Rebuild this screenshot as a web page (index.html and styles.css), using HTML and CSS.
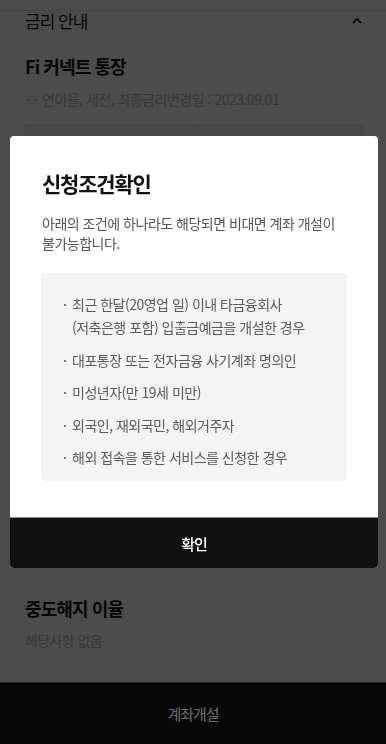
FILE: index.html
```html
<!DOCTYPE html>
<html lang="ko">
<head>
    <meta charset="UTF-8">
    <meta name="viewport" content="width=device-width, initial-scale=1.0">
    <title>Fi 커넥트 통장</title>
    <link rel="stylesheet" href="styles.css">
</head>
<body>

    <div class="page">
        <div class="prev-section"></div>

        <section class="rate-section">
            <div class="rate-head">
                <span class="rate-head-title">금리 안내</span>
                <svg class="chevron" width="10" height="7" viewBox="0 0 10 7">
                    <polyline points="1,6 5,1.8 9,6" fill="none" stroke="#111" stroke-width="1.8"/>
                </svg>
            </div>

            <h2 class="product-title">Fi 커넥트 통장</h2>
            <p class="rate-note">※ 연이율, 세전, 최종금리변경일 : 2023.09.01</p>

            <!-- rate table sits under the dialog, cells left blank -->
            <table class="rate-table">
                <tr>
                    <th></th>
                    <th></th>
                </tr>
                <tr>
                    <td></td>
                    <td></td>
                </tr>
                <tr>
                    <td></td>
                    <td></td>
                </tr>
            </table>
        </section>

        <section class="cancel-section">
            <h2 class="section-title">중도해지 이율</h2>
            <p class="section-text">해당사항 없음</p>
        </section>
    </div>

    <div class="dim"></div>

    <div class="modal">
        <div class="modal-body">
            <h3 class="modal-title">신청조건확인</h3>
            <p class="modal-desc">아래의 조건에 하나라도 해당되면 비대면 계좌 개설이 불가능합니다.</p>

            <ul class="cond-list">
                <li><span class="dot">·</span><span>최근 한달(20영업 일) 이내 타금융회사<br>(저축은행 포함) 입출금예금을 개설한 경우</span></li>
                <li><span class="dot">·</span><span>대포통장 또는 전자금융 사기계좌 명의인</span></li>
                <li><span class="dot">·</span><span>미성년자(만 19세 미만)</span></li>
                <li><span class="dot">·</span><span>외국인, 재외국민, 해외거주자</span></li>
                <li><span class="dot">·</span><span>해외 접속을 통한 서비스를 신청한 경우</span></li>
            </ul>
        </div>
        <button class="modal-button">확인</button>
    </div>

    <div class="bottom-bar">
        <button class="open-button">계좌개설</button>
    </div>

</body>
</html>
```

FILE: styles.css
```css
body {
    margin: 0;
    font-family: "Noto Sans CJK KR", "Noto Sans", sans-serif;
    background-color: #ffffff;
    color: #111111;
    height: 744px;
    overflow: hidden;
    word-break: keep-all;
}

.page {
    padding: 0 23px 0 24px;
}

.prev-section {
    height: 10px;
}

.rate-section {
    border-top: 1px solid #e6e6e6;
    margin: 0 -23px 0 -24px;
    padding: 0 23px 0 24px;
}

.rate-head {
    display: flex;
    justify-content: space-between;
    align-items: center;
    height: 19px;
}

.rate-head-title {
    font-size: 17px;
    line-height: 19px;
    letter-spacing: -1px;
    padding-left: 1px;
}

.chevron {
    margin-right: 1px;
}

.product-title {
    margin: 23px 0 0 1px;
    font-size: 18px;
    line-height: 26px;
    font-weight: 700;
    letter-spacing: -0.9px;
}

.rate-note {
    margin: 10px 0 0 1px;
    font-size: 14px;
    line-height: 20px;
    color: #c0c0c0;
    letter-spacing: -0.5px;
}

.rate-table {
    margin-top: 15px;
    width: 100%;
    height: 400px;
    border-collapse: collapse;
}

.rate-table th {
    background-color: #f2f2f2;
    border: 1px solid #e6e6e6;
    height: 40px;
    width: 50%;
}

.rate-table td {
    border: 1px solid #e6e6e6;
}

.cancel-section {
    margin-top: 71px;
}

.section-title {
    margin: 0 0 0 1px;
    font-size: 18px;
    line-height: 26px;
    font-weight: 700;
    letter-spacing: -0.9px;
}

.section-text {
    margin: 9px 0 0 1px;
    font-size: 14px;
    line-height: 20px;
    color: #c0c0c0;
    letter-spacing: -0.6px;
}

.dim {
    position: fixed;
    inset: 0;
    background-color: rgba(0, 0, 0, 0.7);
    z-index: 10;
}

.modal {
    position: fixed;
    top: 136px;
    left: 10px;
    width: 368px;
    background-color: #ffffff;
    border-radius: 4px;
    overflow: hidden;
    z-index: 20;
}

.modal-body {
    padding: 33px 31px 36px 31px;
}

.modal-title {
    margin: 0 0 0 1px;
    font-size: 21px;
    line-height: 29px;
    font-weight: 700;
    letter-spacing: -1.2px;
    color: #111111;
}

.modal-desc {
    margin: 15px 0 0 1px;
    font-size: 14px;
    line-height: 20px;
    letter-spacing: -0.5px;
    color: #555555;
}

.cond-list {
    list-style: none;
    margin: 20px 0 0 0;
    padding: 20px 16px 12px 22px;
    background-color: #f4f4f4;
    border-radius: 4px;
    display: flex;
    flex-direction: column;
    gap: 9.5px;
}

.cond-list li {
    display: flex;
    font-size: 14px;
    line-height: 23px;
    letter-spacing: -0.5px;
    color: #5a5a5a;
}

.cond-list .dot {
    width: 9px;
    flex-shrink: 0;
}

.modal-button {
    display: block;
    width: 100%;
    height: 51px;
    border: 0;
    border-top: 1px solid #8a8a8a;
    background-color: #111111;
    color: #ffffff;
    font-family: inherit;
    font-size: 15px;
    font-weight: 500;
    letter-spacing: -1px;
    padding: 0;
}

.bottom-bar {
    position: fixed;
    left: 0;
    right: 0;
    bottom: 0;
    height: 61px;
    background-color: #080808;
    border-top: 1px solid #2a2a2a;
    z-index: 15;
}

.open-button {
    display: block;
    width: 100%;
    height: 61px;
    border: 0;
    background: transparent;
    color: #6e6e6e;
    font-family: inherit;
    font-size: 15px;
    letter-spacing: -1px;
    padding: 0;
}
```
